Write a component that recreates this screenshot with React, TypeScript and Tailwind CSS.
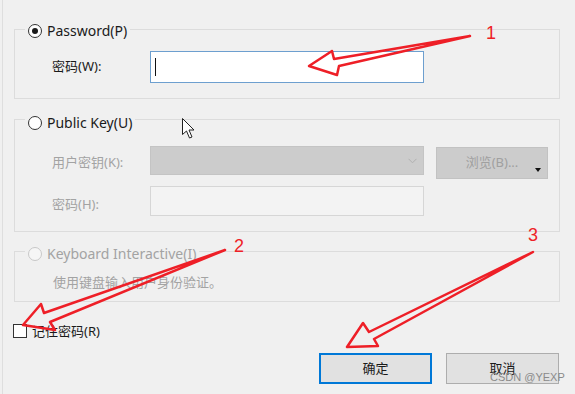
import React from 'react';

const ui = { fontFamily: '"Noto Sans", "Noto Sans CJK SC", sans-serif' };

function Radio({ checked, disabled }: { checked?: boolean; disabled?: boolean }) {
  return (
    <span
      className={`w-[14px] h-[14px] rounded-full border flex items-center justify-center shrink-0 ${
        disabled ? 'border-[#c8c8c8] bg-[#f6f6f6]' : 'border-[#333333] bg-white'
      }`}
    >
      {checked && <span className="w-[6px] h-[6px] rounded-full bg-[#1a1a1a]" />}
    </span>
  );
}

function Legend({ label, checked, disabled, pt }: { label: string; checked?: boolean; disabled?: boolean; pt: string }) {
  return (
    <legend className={`ml-[10px] px-[3px] ${pt}`}>
      <span className="flex items-center h-[20px] gap-[5px]">
        <Radio checked={checked} disabled={disabled} />
        <span className={`text-[14px] leading-[20px] ${disabled ? 'text-[#a3a3a3]' : 'text-[#1a1a1a]'}`}>{label}</span>
      </span>
    </legend>
  );
}

export default function App() {
  return (
    <div className="relative w-[575px] h-[394px] bg-[#f0f0f0] overflow-hidden pl-[2px] flex" style={ui}>
      <div className="flex-1 border-l border-[#dedede] flex flex-col">
        {/* Password group */}
        <fieldset className="mt-[17px] ml-[11px] mr-[15px] border border-[#dcdcdc] px-0 pb-[15px]">
          <Legend label="Password(P)" checked pt="pt-[4px]" />
          <div className="pt-[10px] pl-[37px] flex items-center">
            <span className="w-[98px] text-[13px] text-[#1a1a1a]">密码(W):</span>
            <div className="w-[274px] h-[32px] border border-[#6d9fcf] bg-white flex items-center pl-[4px]">
              <span className="w-[1px] h-[18px] bg-[#111]" />
            </div>
          </div>
        </fieldset>

        {/* Public key group */}
        <fieldset className="mt-[6px] ml-[11px] mr-[15px] border border-[#dcdcdc] px-0 pb-[15px]">
          <Legend label="Public Key(U)" pt="pt-[8px]" />
          <div className="pt-[13px] pl-[37px]">
            <div className="flex items-start">
              <span className="w-[98px] mt-[7px] text-[13px] leading-[18px] text-[#a3a3a3]">用户密钥(K):</span>
              <div className="w-[274px] h-[29px] border border-[#c4c4c4] bg-[#cccccc] flex items-center justify-end pr-[6px]">
                <svg width="9" height="6" viewBox="0 0 9 6" fill="none">
                  <path d="M0.5 0.8 L4.5 4.8 L8.5 0.8" stroke="#b0b0b0" strokeWidth="1" />
                </svg>
              </div>
              <div className="relative ml-[12px] mt-[1px] w-[112px] h-[32px] border border-[#c2c2c2] bg-[#cccccc] flex items-center justify-center">
                <span className="text-[13px] text-[#a0a0a0]">浏览(B)...</span>
                <span className="absolute right-[6px] top-[20px] w-0 h-0 border-l-[3px] border-r-[3px] border-t-[4px] border-l-transparent border-r-transparent border-t-[#111]" />
              </div>
            </div>
            <div className="mt-[7px] flex items-start">
              <span className="w-[98px] mt-[9px] text-[13px] leading-[18px] text-[#a3a3a3]">密码(H):</span>
              <div className="w-[274px] h-[30px] border border-[#d6d6d6] bg-[#f3f3f3]" />
            </div>
          </div>
        </fieldset>

        {/* Keyboard interactive group */}
        <fieldset className="mt-[6px] ml-[11px] mr-[15px] border border-[#dcdcdc] px-0 pb-[10px]">
          <Legend label="Keyboard Interactive(I)" disabled pt="pt-[6px]" />
          <div className="pt-[9px] pl-[38px] text-[13px] leading-[18px] text-[#a3a3a3]">使用键盘输入用户身份验证。</div>
        </fieldset>

        {/* Remember password */}
        <div className="mt-[20px] ml-[10px] flex items-center gap-[5px] h-[18px]">
          <span className="w-[14px] h-[14px] border border-[#333333] bg-white" />
          <span className="text-[13px] leading-[18px] text-[#1a1a1a]">记住密码(R)</span>
        </div>

        {/* Buttons */}
        <div className="mt-[13px] mr-[16px] flex justify-end gap-[14px]">
          <button className="w-[113px] h-[31px] border-2 border-[#0078d7] bg-[#e1e1e1] text-[13px] text-[#1a1a1a]">确定</button>
          <button className="w-[113px] h-[31px] border border-[#adadad] bg-[#e1e1e1] text-[13px] text-[#1a1a1a]">取消</button>
        </div>
      </div>

      {/* watermark */}
      <span
        className="absolute left-[490px] top-[370px] text-[11px] leading-[14px] text-[#8a8a8a]"
        style={{ fontFamily: '"Liberation Sans", sans-serif' }}
      >
        CSDN @YEXP
      </span>

      {/* mouse pointer */}
      <svg className="absolute left-[181px] top-[117px]" width="16" height="23" viewBox="0 0 16 23">
        <path d="M1.5 1.5 L1.5 17.5 L5.5 14 L8.5 21 L11 20 L8 13 L13 13 Z" fill="white" stroke="#222" strokeWidth="1" strokeLinejoin="round" />
      </svg>

      {/* red annotations */}
      <svg className="absolute left-0 top-0 pointer-events-none" width="575" height="394" viewBox="0 0 575 394">
        <g fill="none" stroke="#ee1f27" strokeWidth="2.5" strokeLinejoin="round" strokeLinecap="round">
          <path d="M470 36 L334 59 L332 51 L309 66 L337 75 L339 66 Z" />
          <path d="M225 250 L44 313 L41 304 L23 325 L55 330 L50 322 Z" />
          <path d="M533 252 L369 332 L363 323 L347 347 L378 346 L374 339 Z" />
        </g>
      </svg>
      <span className="absolute left-[486px] top-[24px] text-[18px] leading-[18px] text-[#ee1f27]" style={{ fontFamily: '"Liberation Sans", sans-serif' }}>1</span>
      <span className="absolute left-[234px] top-[237px] text-[18px] leading-[18px] text-[#ee1f27]" style={{ fontFamily: '"Liberation Sans", sans-serif' }}>2</span>
      <span className="absolute left-[528px] top-[226px] text-[18px] leading-[18px] text-[#ee1f27]" style={{ fontFamily: '"Liberation Sans", sans-serif' }}>3</span>
    </div>
  );
}
